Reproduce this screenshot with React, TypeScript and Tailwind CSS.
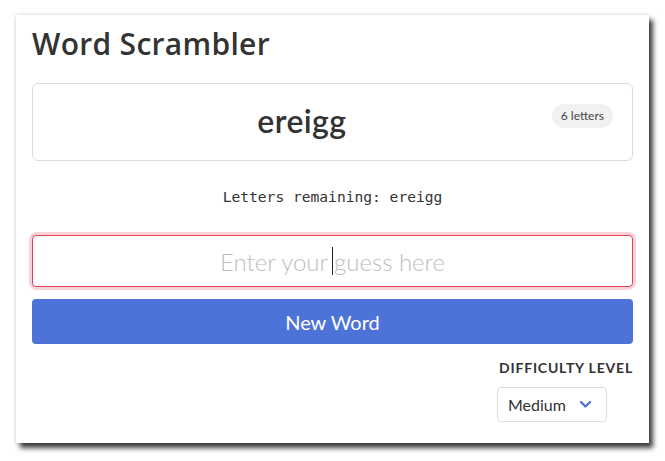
import React, { useState } from 'react';

const App: React.FC = () => {
  const [guess, setGuess] = useState('');
  const [level, setLevel] = useState('Medium');
  const word = 'ereigg';

  return (
    <div className="min-h-screen bg-white pt-[15px] pl-[16px] font-['Lato','Noto_Sans',sans-serif] text-[#333]">
      <div className="w-[633px] h-[428px] bg-white px-4 pt-[10px] shadow-[4px_5px_5px_rgba(0,0,0,0.75),0_0_4px_rgba(0,0,0,0.18)]">
        <h1 className="font-['Open_Sans',sans-serif] text-[30px] font-semibold leading-[38px] tracking-[0.3px]">Word Scrambler</h1>

        <div className="mt-[20px] h-[78px] rounded-md border border-[#dcdcdc] flex items-center px-[19px]">
          <div className="flex-1 text-center">
            <span className="text-[32px] font-semibold leading-none tracking-[0.4px]">{word}</span>
          </div>
          <span className="self-start mt-[20px] rounded-full bg-[#f1f1f1] px-[9px] py-[4px] text-[12px] leading-[16px] text-[#444]">
            6 letters
          </span>
        </div>

        <p className="mt-[27px] text-center font-['DejaVu_Sans_Mono',monospace] text-[14.6px] leading-[18px] text-[#333]">
          Letters remaining: {word}
        </p>

        <div className="relative mt-[29px] rounded-[5px] ring-[3px] ring-[#f8d2d7]">
          <input
            autoFocus
            value={guess}
            onChange={e => setGuess(e.target.value)}
            placeholder="Enter your guess here"
            className="block w-full h-[52px] rounded-[4px] border border-[#dc4157] bg-white text-center text-[24px] font-light text-[#333] placeholder:text-[#bdbdbd] outline-none caret-[#222]"
          />
          {guess === '' && (
            <span className="pointer-events-none absolute left-[300px] top-[12px] h-[28px] w-px bg-[#222]" />
          )}
        </div>

        <button className="mt-[12px] block w-full h-[45px] rounded-[4px] bg-[#4e73d8] text-white text-[20px] leading-none">
          New Word
        </button>

        <div className="mt-[15px] flex flex-col items-end">
          <label className="text-[14px] font-bold uppercase tracking-[0.8px] leading-[18px]">Difficulty Level</label>
          <div className="mt-[10px] mr-[26px] relative">
            <select
              value={level}
              onChange={e => setLevel(e.target.value)}
              className="appearance-none w-[110px] h-[35px] rounded-[4px] border border-[#dcdcdc] bg-white pl-[10px] text-[16px] text-[#333] outline-none"
            >
              <option>Easy</option>
              <option>Medium</option>
              <option>Hard</option>
            </select>
            <svg className="pointer-events-none absolute left-[82px] top-[13px]" width="13" height="9" viewBox="0 0 13 9" fill="none">
              <path d="M2 2l4.5 4.5L11 2" stroke="#4e73d8" strokeWidth="2.4" strokeLinecap="round" strokeLinejoin="round" />
            </svg>
          </div>
        </div>
      </div>
    </div>
  );
};

export default App;
